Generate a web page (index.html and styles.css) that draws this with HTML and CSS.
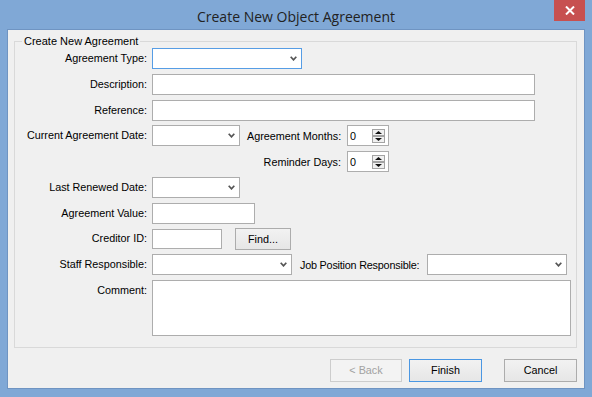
FILE: index.html
```html
<!DOCTYPE html>
<html lang="en">
<head>
    <meta charset="UTF-8">
    <title>Create New Object Agreement</title>
    <link rel="stylesheet" href="styles.css">
</head>
<body>
    <div class="window">
        <div class="titlebar">
            <span class="title">Create New Object Agreement</span>
            <div class="close-btn">
                <svg width="10" height="9" viewBox="0 0 10 9"><path d="M1 0.5 L9 8.5 M9 0.5 L1 8.5" stroke="#fff" stroke-width="2"/></svg>
            </div>
        </div>
        <div class="client">
            <fieldset class="group">
                <legend>Create New Agreement</legend>
                <div class="form">
                    <div class="row">
                        <label class="lbl">Agreement Type:</label>
                        <div class="combo focused w-type">
                            <svg class="chev" width="7" height="5" viewBox="0 0 7 5"><path d="M0.7 0.7 L3.5 3.8 L6.3 0.7" fill="none" stroke="#555" stroke-width="1.7"/></svg>
                        </div>
                    </div>
                    <div class="row">
                        <label class="lbl">Description:</label>
                        <div class="field w-wide"></div>
                    </div>
                    <div class="row">
                        <label class="lbl">Reference:</label>
                        <div class="field w-wide"></div>
                    </div>
                    <div class="row">
                        <label class="lbl">Current Agreement Date:</label>
                        <div class="combo w-date">
                            <svg class="chev" width="7" height="5" viewBox="0 0 7 5"><path d="M0.7 0.7 L3.5 3.8 L6.3 0.7" fill="none" stroke="#555" stroke-width="1.7"/></svg>
                        </div>
                        <label class="sub-lbl">Agreement Months:</label>
                        <div class="spinner">
                            <span class="spin-val">0</span>
                            <svg class="spin-btns" width="13" height="14" viewBox="0 0 13 14">
                                <rect x="0.5" y="0.5" width="12" height="6" fill="#f0f0f0" stroke="#a3a3a3"/>
                                <rect x="0.5" y="7.5" width="12" height="6" fill="#f0f0f0" stroke="#a3a3a3"/>
                                <path d="M3 5 L6.5 2 L10 5Z" fill="#111"/>
                                <path d="M3 9 L6.5 12 L10 9Z" fill="#111"/>
                            </svg>
                        </div>
                    </div>
                    <div class="row">
                        <span class="lbl"></span>
                        <span class="w-date"></span>
                        <label class="sub-lbl">Reminder Days:</label>
                        <div class="spinner">
                            <span class="spin-val">0</span>
                            <svg class="spin-btns" width="13" height="14" viewBox="0 0 13 14">
                                <rect x="0.5" y="0.5" width="12" height="6" fill="#f0f0f0" stroke="#a3a3a3"/>
                                <rect x="0.5" y="7.5" width="12" height="6" fill="#f0f0f0" stroke="#a3a3a3"/>
                                <path d="M3 5 L6.5 2 L10 5Z" fill="#111"/>
                                <path d="M3 9 L6.5 12 L10 9Z" fill="#111"/>
                            </svg>
                        </div>
                    </div>
                    <div class="row">
                        <label class="lbl">Last Renewed Date:</label>
                        <div class="combo w-date">
                            <svg class="chev" width="7" height="5" viewBox="0 0 7 5"><path d="M0.7 0.7 L3.5 3.8 L6.3 0.7" fill="none" stroke="#555" stroke-width="1.7"/></svg>
                        </div>
                    </div>
                    <div class="row">
                        <label class="lbl">Agreement Value:</label>
                        <div class="field w-value"></div>
                    </div>
                    <div class="row">
                        <label class="lbl">Creditor ID:</label>
                        <div class="field w-creditor"></div>
                        <div class="btn btn-find">Find...</div>
                    </div>
                    <div class="row">
                        <label class="lbl">Staff Responsible:</label>
                        <div class="combo w-staff">
                            <svg class="chev" width="7" height="5" viewBox="0 0 7 5"><path d="M0.7 0.7 L3.5 3.8 L6.3 0.7" fill="none" stroke="#555" stroke-width="1.7"/></svg>
                        </div>
                        <label class="job-lbl">Job Position Responsible:</label>
                        <div class="combo w-staff">
                            <svg class="chev" width="7" height="5" viewBox="0 0 7 5"><path d="M0.7 0.7 L3.5 3.8 L6.3 0.7" fill="none" stroke="#555" stroke-width="1.7"/></svg>
                        </div>
                    </div>
                    <div class="row row-comment">
                        <label class="lbl">Comment:</label>
                        <div class="field w-comment"></div>
                    </div>
                </div>
            </fieldset>
            <div class="actions">
                <div class="btn btn-back">&lt; Back</div>
                <div class="btn btn-finish">Finish</div>
                <div class="btn btn-cancel">Cancel</div>
            </div>
        </div>
    </div>
</body>
</html>
```

FILE: styles.css
```css
body {
    margin: 0;
    font-family: "Liberation Sans", Arial, sans-serif;
    font-size: 10.8px;
    color: #000;
}
.window {
    width: 592px;
    height: 397px;
    background-color: #80a8d6;
    position: relative;
    box-sizing: border-box;
}
.titlebar {
    height: 29px;
    display: flex;
    justify-content: center;
    align-items: center;
}
.title {
    font-family: "Open Sans", sans-serif;
    font-size: 14px;
    color: #222;
    margin-top: 3px;
}
.close-btn {
    position: absolute;
    top: 0;
    right: 7px;
    width: 31px;
    height: 21px;
    background-color: #c75050;
    display: flex;
    justify-content: center;
    align-items: center;
}
.client {
    margin: 0 7px;
    height: 360px;
    box-sizing: border-box;
    border: 1px solid #6f94c2;
    background-color: #f0f0f0;
}
.group {
    margin: 5px 7px 0 6px;
    padding: 0 0 11px 0;
    border: 1px solid #d9d9d9;
}
.group legend {
    margin-left: 7px;
    padding: 0 2px;
    line-height: 13px;
    font-size: 11px;
}
.form {
    display: flex;
    flex-direction: column;
    gap: 4.75px;
}
.row {
    display: flex;
    align-items: center;
    height: 21px;
}
.row-comment {
    height: 56px;
    align-items: flex-start;
}
.lbl {
    width: 132px;
    margin-right: 5px;
    text-align: right;
    line-height: 21px;
    flex-shrink: 0;
    white-space: nowrap;
}
.sub-lbl {
    width: 94px;
    margin: 0 6px 0 7px;
    text-align: right;
    white-space: nowrap;
}
.job-lbl {
    width: 119px;
    margin: 0 8px;
    white-space: nowrap;
    letter-spacing: -0.2px;
    flex-shrink: 0;
}
.field, .combo, .spinner {
    height: 21px;
    box-sizing: border-box;
    border: 1px solid #adadad;
    background-color: #fff;
    flex-shrink: 0;
}
.combo {
    display: flex;
    justify-content: flex-end;
    align-items: center;
}
.combo.focused {
    border-color: #569de5;
}
.chev {
    margin-right: 4px;
}
.spinner {
    width: 42px;
    display: flex;
    align-items: center;
}
.spin-val {
    padding-left: 2px;
}
.spin-btns {
    margin-left: auto;
    margin-right: 3px;
}
.w-type { width: 150px; }
.w-wide { width: 383px; }
.w-date { width: 88px; flex-shrink: 0; }
.w-value { width: 103px; }
.w-creditor { width: 70px; height: 20px; }
.w-staff { width: 140px; }
.w-comment { width: 419px; height: 56px; }
.btn {
    height: 22px;
    box-sizing: border-box;
    border: 1px solid #acacac;
    background: linear-gradient(#f2f2f2, #e6e6e6);
    display: flex;
    justify-content: center;
    align-items: center;
    flex-shrink: 0;
}
.btn-find {
    width: 56px;
    margin-left: 13px;
}
.actions {
    display: flex;
    justify-content: flex-end;
    margin: 11px 7px 0 0;
}
.actions .btn {
    height: 23px;
    width: 73px;
}
.actions .btn-back {
    width: 72px;
    margin-right: 7px;
    border-color: #cdcdcd;
    background: #f3f3f3;
    color: #a2a2a2;
}
.actions .btn-finish {
    margin-right: 22px;
    border-color: #4a97e3;
}
```
